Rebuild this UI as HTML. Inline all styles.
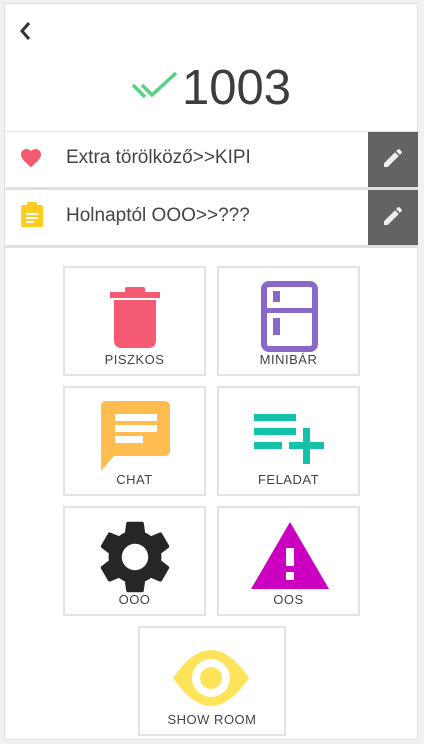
<!DOCTYPE html>
<html><head><meta charset="utf-8"><style>
body{margin:0;width:424px;height:744px;background:#f1f1f1;font-family:"Liberation Sans",sans-serif;position:relative;overflow:hidden}
.card{position:absolute;left:4px;top:3px;width:414px;height:737px;background:#fff;border:1px solid #e2e2e2;box-sizing:border-box}
.row{position:absolute;left:5px;width:413px;height:55px;background:#fff}
.row .t{position:absolute;left:61px;top:15px;font-size:19px;color:#444}
.row .ed{position:absolute;right:0;top:0;width:50px;height:100%;background:#636363}
.tile{position:absolute;width:143px;height:110px;border:2px solid #e3e3e3;box-sizing:border-box;background:#fff}
.tile .l{position:absolute;left:0;right:0;bottom:7px;text-align:center;font-size:13px;color:#444;letter-spacing:.5px}
.tile svg{position:absolute}
</style></head><body>
<div class="card"></div>
<svg style="position:absolute;left:17px;top:20px" width="18" height="22" viewBox="0 0 18 22"><path d="M12 3 L5 11 L12 19" fill="none" stroke="#333" stroke-width="3"/></svg>
<svg style="position:absolute;left:131px;top:69px" width="50" height="32" viewBox="0 0 50 32"><path d="M2 16 L14 28 M11 16 L21 26 L45 4" fill="none" stroke="#57d282" stroke-width="3.5"/></svg>
<div style="position:absolute;left:182px;top:58px;font-size:49px;color:#3d3d3d;line-height:60px">1003</div>
<div style="position:absolute;left:5px;top:131px;width:413px;height:117px;background:#e0e0e0"></div>
<div class="row" style="top:132px"><svg style="position:absolute;left:13px;top:14px" width="26" height="24" viewBox="0 0 24 24"><path d="M12 21.35l-1.45-1.32C5.4 15.36 2 12.28 2 8.5 2 5.42 4.42 3 7.5 3c1.74 0 3.41.81 4.5 2.09C13.09 3.81 14.76 3 16.5 3 19.58 3 22 5.42 22 8.5c0 3.78-3.4 6.86-8.55 11.54L12 21.35z" fill="#f55a73"/></svg><div class="t">Extra törölköző&gt;&gt;KIPI</div><div class="ed"><svg style="position:absolute;left:13px;top:14px" width="24" height="24" viewBox="0 0 24 24"><path d="M3 17.25V21h3.75L17.81 9.94l-3.75-3.75L3 17.25zM20.71 7.04a1 1 0 0 0 0-1.41l-2.34-2.34a1 1 0 0 0-1.41 0l-1.83 1.83 3.75 3.75 1.83-1.83z" fill="#eee"/></svg></div></div>
<div class="row" style="top:190px"><svg style="position:absolute;left:15px;top:12px" width="24" height="26" viewBox="0 0 24 26"><rect x="1" y="3" width="22" height="22" rx="2" fill="#ffcd1f"/><rect x="7" y="0" width="10" height="6" rx="1" fill="#ffcd1f"/><rect x="6" y="11" width="12" height="2" fill="#fff"/><rect x="6" y="15" width="12" height="2" fill="#fff"/><rect x="6" y="19" width="8" height="2" fill="#fff"/></svg><div class="t">Holnaptól OOO&gt;&gt;???</div><div class="ed"><svg style="position:absolute;left:13px;top:14px" width="24" height="24" viewBox="0 0 24 24"><path d="M3 17.25V21h3.75L17.81 9.94l-3.75-3.75L3 17.25zM20.71 7.04a1 1 0 0 0 0-1.41l-2.34-2.34a1 1 0 0 0-1.41 0l-1.83 1.83 3.75 3.75 1.83-1.83z" fill="#eee"/></svg></div></div>

<div class="tile" style="left:63px;top:266px"><svg style="left:45px;top:17px" width="52" height="64" viewBox="0 0 52 64"><rect x="0" y="7" width="50" height="6" fill="#f55a73"/><rect x="15" y="2" width="20" height="6" rx="2" fill="#f55a73"/><path d="M4 15 H46 V56 a7 7 0 0 1-7 7 H11 a7 7 0 0 1-7-7Z" fill="#f55a73"/></svg><div class="l">PISZKOS</div></div>
<div class="tile" style="left:217px;top:266px"><svg style="left:42px;top:13px" width="58" height="72" viewBox="0 0 58 72"><rect x="3" y="3" width="51" height="65" rx="5" fill="none" stroke="#8a68c8" stroke-width="6"/><rect x="3" y="27" width="51" height="5" fill="#8a68c8"/><rect x="12" y="10" width="7" height="11" fill="#8a68c8"/><rect x="12" y="37" width="7" height="17" fill="#8a68c8"/></svg><div class="l">MINIBÁR</div></div>
<div class="tile" style="left:63px;top:386px"><svg style="left:35px;top:13px" width="72" height="72" viewBox="0 0 72 72"><path d="M5 0 H65 a5 5 0 0 1 5 5 V50 a5 5 0 0 1-5 5 H14 L1 70 V5 a5 5 0 0 1 4-5Z" fill="#ffbd4f"/><rect x="15" y="13" width="42" height="7" fill="#fff"/><rect x="15" y="24" width="42" height="7" fill="#fff"/><rect x="15" y="35" width="28" height="7" fill="#fff"/></svg><div class="l">CHAT</div></div>
<div class="tile" style="left:217px;top:386px"><svg style="left:35px;top:26px" width="72" height="52" viewBox="0 0 72 52"><rect x="0" y="0" width="42" height="7" fill="#14c2aa"/><rect x="0" y="14" width="42" height="7" fill="#14c2aa"/><rect x="0" y="28" width="28" height="7" fill="#14c2aa"/><rect x="35" y="28" width="35" height="7" fill="#14c2aa"/><rect x="49" y="14" width="7" height="36" fill="#14c2aa"/></svg><div class="l">FELADAT</div></div>
<div class="tile" style="left:63px;top:506px"><svg style="left:26px;top:5px" width="88" height="88" viewBox="0 0 24 24"><path d="M19.14 12.94c.04-.3.06-.61.06-.94 0-.32-.02-.64-.07-.94l2.03-1.58a.49.49 0 0 0 .12-.61l-1.92-3.32a.488.488 0 0 0-.59-.22l-2.39.96c-.5-.38-1.030-.7-1.62-.94l-.36-2.54a.484.484 0 0 0-.48-.41h-3.84c-.24 0-.43.17-.47.41l-.36 2.54c-.59.24-1.13.57-1.62.94l-2.39-.96c-.22-.08-.47 0-.59.22L2.74 8.87c-.12.21-.08.47.12.61l2.03 1.58c-.05.3-.09.63-.09.94s.02.64.07.94l-2.03 1.58a.49.49 0 0 0-.12.61l1.92 3.32c.12.22.37.29.59.22l2.39-.96c.5.38 1.030.7 1.62.94l.36 2.54c.05.24.24.41.48.41h3.84c.24 0 .44-.17.47-.41l.36-2.54c.59-.24 1.13-.56 1.62-.94l2.39.96c.22.08.47 0 .59-.22l1.92-3.32c.12-.22.07-.47-.12-.61l-2.010-1.58zM12 15.6c-1.98 0-3.6-1.62-3.6-3.6s1.62-3.6 3.6-3.6 3.6 1.62 3.6 3.6-1.62 3.6-3.6 3.6z" fill="#262626"/></svg><div class="l">OOO</div></div>
<div class="tile" style="left:217px;top:506px"><svg style="left:31px;top:13px" width="80" height="70" viewBox="0 0 80 70"><path d="M40 1 L79 68 H1Z" fill="#cc00c0"/><rect x="36" y="27" width="8" height="18" fill="#fff"/><rect x="36" y="51" width="8" height="8" fill="#fff"/></svg><div class="l">OOS</div></div>
<div class="tile" style="left:138px;top:626px;width:148px"><svg style="left:31px;top:22px" width="80" height="56" viewBox="0 0 80 56"><path d="M2 28 Q40 -28 78 28 Q40 84 2 28Z" fill="#ffe35a"/><circle cx="40" cy="28" r="19" fill="#fff"/><circle cx="40" cy="28" r="11" fill="#ffe35a"/></svg><div class="l">SHOW ROOM</div></div>
</body></html>
